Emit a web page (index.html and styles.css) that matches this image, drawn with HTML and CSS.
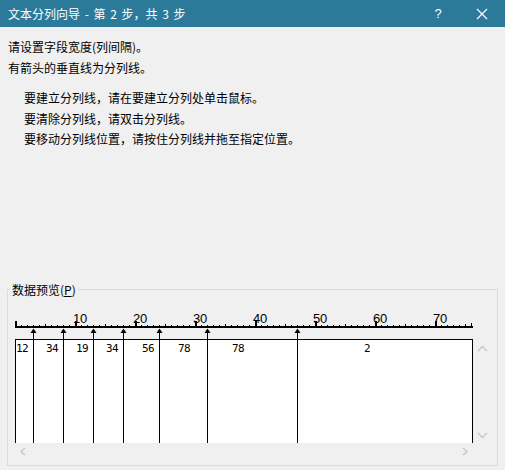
FILE: index.html
```html
<!DOCTYPE html>
<html lang="zh-CN">
<head>
<meta charset="utf-8">
<title>文本分列向导</title>
<link rel="stylesheet" href="styles.css">
</head>
<body>
<div class="dialog">
  <header class="titlebar">
    <span class="title">文本分列向导 - 第 2 步，共 3 步</span>
    <span class="help">?</span>
    <span class="close"><svg width="12" height="12" viewBox="0 0 12 12"><path d="M1 1 L11 11 M11 1 L1 11" stroke="#fff" stroke-width="1.2" fill="none"/></svg></span>
  </header>
  <div class="intro">
    <p>请设置字段宽度(列间隔)。</p>
    <p>有箭头的垂直线为分列线。</p>
  </div>
  <ul class="tips">
    <li>要建立分列线，请在要建立分列处单击鼠标。</li>
    <li>要清除分列线，请双击分列线。</li>
    <li>要移动分列线位置，请按住分列线并拖至指定位置。</li>
  </ul>
  <fieldset class="group">
    <legend>数据预览(<u>P</u>)</legend>
    <div class="preview">
      <div class="ruler">
        <svg width="458" height="29" viewBox="0 0 458 29">
          <defs>
            <pattern id="t1" width="6" height="29" patternUnits="userSpaceOnUse"><rect x="0" y="15" width="1" height="1" fill="#000"/></pattern>
            <pattern id="t5" x="30" width="60" height="29" patternUnits="userSpaceOnUse"><rect x="0" y="14" width="1" height="2" fill="#000"/></pattern>
            <pattern id="t10" width="60" height="29" patternUnits="userSpaceOnUse"><rect x="0" y="11" width="2" height="6" fill="#000"/></pattern>
          </defs>
          <rect x="0" y="0" width="458" height="29" fill="url(#t1)"/>
          <rect x="0" y="0" width="458" height="29" fill="url(#t5)"/>
          <rect x="0" y="0" width="458" height="29" fill="url(#t10)"/>
          <rect x="0" y="16" width="458" height="2" fill="#000"/>
          <rect x="456" y="13" width="1" height="4" fill="#000"/>
          <g class="ruler-num">
            <text x="58" y="13">10</text>
            <text x="118" y="13">20</text>
            <text x="178" y="13">30</text>
            <text x="238" y="13">40</text>
            <text x="298" y="13">50</text>
            <text x="358" y="13">60</text>
            <text x="418" y="13">70</text>
          </g>
        </svg>
      </div>
      <div class="corner"></div>
      <div class="data"><pre>12   34   19   34    56    78       78                    2</pre></div>
      <div class="vscroll">
        <svg width="17" height="104" viewBox="0 0 17 104"><polyline points="5,12 9.5,7.5 14,12" stroke="#c6c6c6" stroke-width="1.4" fill="none"/><polyline points="5,94 9.5,98.5 14,94" stroke="#c6c6c6" stroke-width="1.4" fill="none"/></svg>
      </div>
      <div class="hscroll">
        <svg width="458" height="17" viewBox="0 0 458 17"><polyline points="10,5 6,8.5 10,12" stroke="#c6c6c6" stroke-width="1.4" fill="none"/><polyline points="448,5 452,8.5 448,12" stroke="#c6c6c6" stroke-width="1.4" fill="none"/></svg>
      </div>
      <div class="corner"></div>
      <svg class="breaks" width="458" height="133" viewBox="0 0 458 133">
        <g fill="#000">
          <rect x="18" y="22" width="1" height="111"/><polygon points="18.5,18.5 15.5,23 21.5,23"/>
          <rect x="48" y="22" width="1" height="111"/><polygon points="48.5,18.5 45.5,23 51.5,23"/>
          <rect x="78" y="22" width="1" height="111"/><polygon points="78.5,18.5 75.5,23 81.5,23"/>
          <rect x="108" y="22" width="1" height="111"/><polygon points="108.5,18.5 105.5,23 111.5,23"/>
          <rect x="144" y="22" width="1" height="111"/><polygon points="144.5,18.5 141.5,23 147.5,23"/>
          <rect x="192" y="22" width="1" height="111"/><polygon points="192.5,18.5 189.5,23 195.5,23"/>
          <rect x="282" y="22" width="1" height="111"/><polygon points="282.5,18.5 279.5,23 285.5,23"/>
        </g>
      </svg>
    </div>
  </fieldset>
</div>
</body>
</html>
```
FILE: styles.css
```css
html, body {
  margin: 0;
  padding: 0;
}
body {
  width: 505px;
  height: 470px;
  overflow: hidden;
  background: #f0f0f0;
  font-family: "Noto Sans CJK SC", "Noto Sans", sans-serif;
  font-size: 12px;
  color: #000;
}
.dialog {
  width: 505px;
  height: 470px;
}
.titlebar {
  height: 27px;
  background: #2c7a9a;
  color: #fff;
  display: flex;
  align-items: center;
}
.title {
  flex: 1;
  padding-left: 8px;
  font-size: 12px;
  line-height: 27px;
  word-spacing: 2px;
}
.help {
  width: 24px;
  text-align: center;
  margin-right: 9px;
  font-family: "Liberation Sans", sans-serif;
  font-size: 13px;
}
.close {
  width: 46px;
  display: flex;
  justify-content: center;
  align-items: center;
}
.intro {
  padding: 9px 8px 0;
}
.intro p {
  margin: 0;
  line-height: 21px;
}
.tips {
  list-style: none;
  margin: 10px 0 0;
  padding: 0 0 0 24px;
}
.tips li {
  line-height: 20.5px;
}
.group {
  margin: 133px 7px 0 7px;
  padding: 0 0 5px 0;
  border: 1px solid #dcdcdc;
  min-width: 0;
}
.group legend {
  margin-left: 2px;
  padding: 0 2px;
  font-size: 12px;
  line-height: 14px;
}
.preview {
  position: relative;
  margin: 13px 0 0 7px;
  display: grid;
  grid-template-columns: 458px 17px;
  grid-template-rows: 29px 104px 17px;
}
.ruler svg, .vscroll svg, .hscroll svg {
  display: block;
}
.ruler-num text {
  font-family: "Liberation Sans", sans-serif;
  font-size: 13px;
  letter-spacing: -0.3px;
  fill: #000;
}
.data {
  box-sizing: border-box;
  background: #fff;
  border: 1px solid #000;
  border-bottom: none;
}
.data pre {
  margin: 0;
  padding-top: 2px;
  font-family: "DejaVu Sans Mono", monospace;
  font-size: 11px;
  letter-spacing: -0.622px;
  line-height: 14px;
}
.breaks {
  position: absolute;
  left: 0;
  top: 0;
  pointer-events: none;
}
```
